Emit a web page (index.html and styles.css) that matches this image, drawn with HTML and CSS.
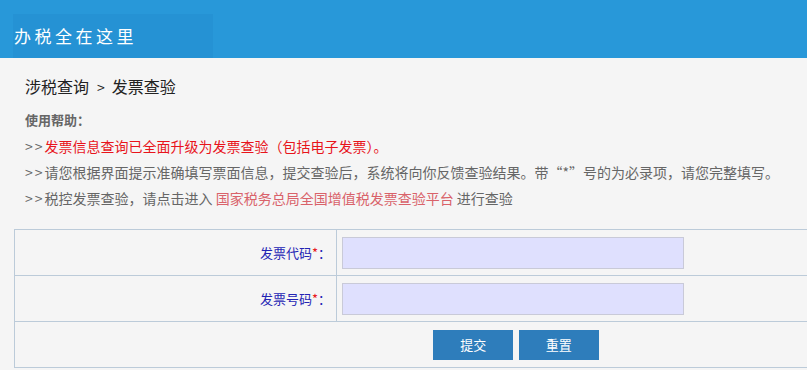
FILE: index.html
```html
<!DOCTYPE html>
<html lang="zh-CN">
  <head>
    <meta charset="UTF-8" />
    <meta name="viewport" content="width=device-width, initial-scale=1.0" />
    <title>发票查验</title>
    <link rel="stylesheet" href="styles.css">
  </head>
  <body>
    <!-- Header -->
    <header class="header">
      <div class="header-title">办税全在这里</div>
    </header>

    <!-- Main -->
    <main class="content">
      <div class="breadcrumb">涉税查询<span class="sep">&gt;</span>发票查验</div>

      <div class="help">
        <div class="help-title">使用帮助：</div>
        <p><span class="arrow">&gt;&gt;</span><span class="red">发票信息查询已全面升级为发票查验（包括电子发票）。</span></p>
        <p><span class="arrow">&gt;&gt;</span>请您根据界面提示准确填写票面信息，提交查验后，系统将向你反馈查验结果。带“*”号的为必录项，请您完整填写。</p>
        <p><span class="arrow">&gt;&gt;</span>税控发票查验，请点击进入 <a href="#" class="link">国家税务总局全国增值税发票查验平台</a> 进行查验</p>
      </div>

      <table class="form-table">
        <tr>
          <td class="label">发票代码<span class="star">*</span>：</td>
          <td class="field"><input type="text" class="input" /></td>
        </tr>
        <tr>
          <td class="label">发票号码<span class="star">*</span>：</td>
          <td class="field"><input type="text" class="input" /></td>
        </tr>
        <tr>
          <td colspan="2" class="actions">
            <button class="btn">提交</button>
            <button class="btn">重置</button>
          </td>
        </tr>
      </table>
    </main>
  </body>
</html>
```

FILE: styles.css
```css
* {
  margin: 0;
  padding: 0;
  box-sizing: border-box;
  font-family: "Noto Sans CJK SC", "Liberation Sans", sans-serif;
}

body {
  background-color: #f5f5f5;
  overflow: hidden;
  width: 807px;
  height: 370px;
}

/* Header */
.header {
  height: 58px;
  background-color: #2898d9;
  padding: 14px 0 0 13px;
}

.header-title {
  width: 200px;
  height: 44px;
  background-color: #2592d4;
  color: #fff;
  font-size: 17px;
  letter-spacing: 3.5px;
  line-height: 44px;
  padding-left: 1px;
}

/* Content */
.content {
  padding: 15px 0 0 14px;
}

.breadcrumb {
  font-size: 16px;
  color: #222;
  line-height: 26px;
  padding-left: 11px;
}

.breadcrumb .sep {
  font-size: 14px;
  margin: 0 7px 0 8px;
}

.help {
  padding: 7px 0 0 11px;
  color: #666;
  font-size: 14px;
}

.help-title {
  font-size: 13px;
  font-weight: bold;
  line-height: 26px;
}

.help p {
  line-height: 26px;
}

.arrow {
  letter-spacing: 2px;
}

.red {
  color: #e8141b;
}

.link {
  color: #d9626a;
  text-decoration: none;
}

/* Form table */
.form-table {
  margin-top: 18px;
  width: 1004px;
  border-collapse: collapse;
}

.form-table td {
  border: 1px solid #bccbd9;
  height: 46px;
}

.label {
  width: 322px;
  text-align: right;
  padding-right: 5px;
  font-size: 13px;
  color: #2424b4;
}

.star {
  color: #e8141b;
}

.field {
  padding-left: 5px;
}

.input {
  display: block;
  width: 342px;
  height: 32px;
  background-color: #dfe0fe;
  border: 1px solid #c9cad8;
  outline: none;
}

.actions {
  text-align: center;
}

.btn {
  width: 80px;
  height: 30px;
  margin: 0 1px;
  border: none;
  background-color: #2e7dbb;
  color: #fff;
  font-size: 13px;
  vertical-align: middle;
  cursor: pointer;
}
```
